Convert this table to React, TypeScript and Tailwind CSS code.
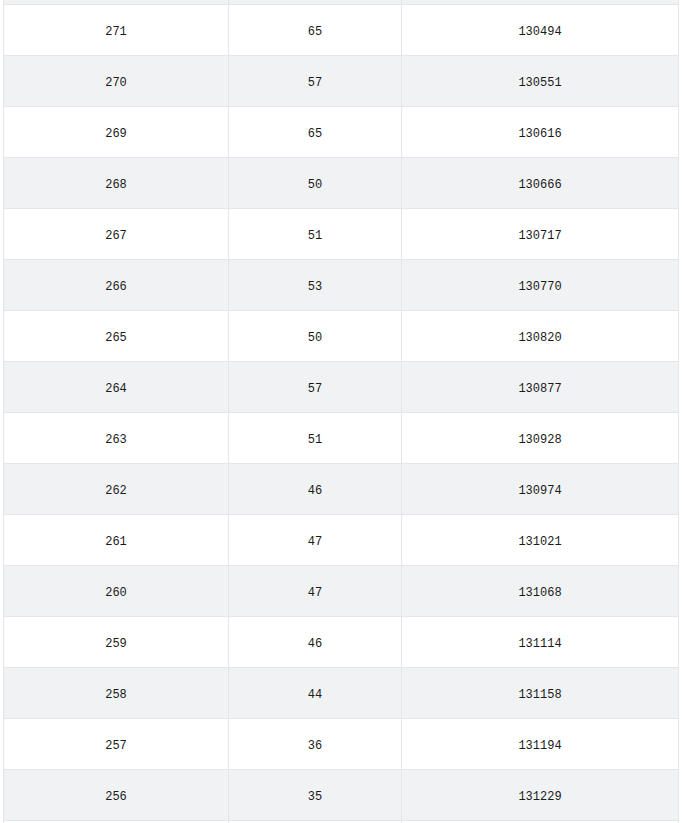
import React from "react";

type Row = { id: number; count: number; total: number };

const rows: Row[] = [
  { id: 271, count: 65, total: 130494 },
  { id: 270, count: 57, total: 130551 },
  { id: 269, count: 65, total: 130616 },
  { id: 268, count: 50, total: 130666 },
  { id: 267, count: 51, total: 130717 },
  { id: 266, count: 53, total: 130770 },
  { id: 265, count: 50, total: 130820 },
  { id: 264, count: 57, total: 130877 },
  { id: 263, count: 51, total: 130928 },
  { id: 262, count: 46, total: 130974 },
  { id: 261, count: 47, total: 131021 },
  { id: 260, count: 47, total: 131068 },
  { id: 259, count: 46, total: 131114 },
  { id: 258, count: 44, total: 131158 },
  { id: 257, count: 36, total: 131194 },
  { id: 256, count: 35, total: 131229 },
];

const cell =
  "flex h-[50px] items-center justify-center border-r border-[#e4e6eb] pt-[4px]";

export default function App() {
  return (
    <div className="h-[823px] overflow-hidden bg-white">
      <div
        className="ml-[3px] w-[676px] border-l border-[#e4e6eb] text-[12px] text-[#1a1a1a]"
        style={{ fontFamily: '"Liberation Mono", "DejaVu Sans Mono", monospace' }}
      >
        {/* tail of the row scrolled above */}
        <div className="grid h-[4px] grid-cols-[225px_173px_277px] bg-[#f1f2f4]">
          <div className="border-r border-[#e4e6eb]" />
          <div className="border-r border-[#e4e6eb]" />
          <div className="border-r border-[#e4e6eb]" />
        </div>
        {rows.map((row, index) => (
          <div
            key={row.id}
            className={
              index % 2 === 1
                ? "grid grid-cols-[225px_173px_277px] border-t border-[#e4e6eb] bg-[#f1f2f4]"
                : "grid grid-cols-[225px_173px_277px] border-t border-[#e4e6eb] bg-white"
            }
          >
            <div className={cell}>{row.id}</div>
            <div className={cell}>{row.count}</div>
            <div className={cell}>{row.total}</div>
          </div>
        ))}
        {/* start of the next row below */}
        <div className="grid h-[10px] grid-cols-[225px_173px_277px] border-t border-[#e4e6eb] bg-white">
          <div className="border-r border-[#e4e6eb]" />
          <div className="border-r border-[#e4e6eb]" />
          <div className="border-r border-[#e4e6eb]" />
        </div>
      </div>
    </div>
  );
}
